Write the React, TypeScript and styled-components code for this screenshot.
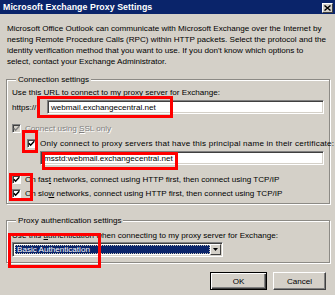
import React from "react";
import styled, { createGlobalStyle } from "styled-components";

const GlobalStyle = createGlobalStyle`
  html, body { margin: 0; padding: 0; background: #d4d0c8; }
  body { font-family: "Liberation Sans", Arial, sans-serif; }
`;

const FONT = `"Liberation Sans", Arial, sans-serif`;

const Window = styled.div`
  position: relative;
  width: 335px;
  height: 295px;
  background: #d4d0c8;
  font-family: ${FONT};
  font-size: 8.1px;
  color: #000;
  overflow: hidden;
  display: flex;
  flex-direction: column;
`;

const TitleBar = styled.div`
  height: 14px;
  background: #0a246a;
  display: flex;
  align-items: center;
  justify-content: space-between;
  padding: 0 2px 0 3px;
`;

const Title = styled.span`
  color: #fff;
  font-weight: bold;
  font-size: 8.8px;
  letter-spacing: 0.05px;
`;

const CloseButton = styled.div`
  width: 11px;
  height: 10px;
  margin-top: 1px;
  box-sizing: border-box;
  background: #d4d0c8;
  border: 1px solid;
  border-color: #fff #404040 #404040 #fff;
  display: flex;
  align-items: center;
  justify-content: center;
`;

const Content = styled.div`
  display: flex;
  flex-direction: column;
  padding: 0 5px 0 6px;
`;

const Description = styled.p`
  margin: 9px 0 0 1px;
  line-height: 11px;
  white-space: nowrap;
  font-size: 8.12px;
`;

const Group = styled.fieldset<{ $top: number; $bottom: number }>`
  margin: ${(p) => p.$top}px 0 0 0;
  padding: 0 5px ${(p) => p.$bottom}px 5px;
  border: 1px solid #8c8a85;
  box-shadow: inset 1px 1px 0 #fff, 1px 1px 0 #fff;
  min-width: 0;
  display: flex;
  flex-direction: column;
`;

const Legend = styled.legend`
  margin-left: 4px;
  padding: 0 2px;
  line-height: 11px;
  background: #d4d0c8;
`;

const Line = styled.div<{ $top: number; $indent?: number; $disabled?: boolean; $spacing?: number }>`
  display: flex;
  align-items: center;
  height: 11px;
  line-height: 11px;
  white-space: nowrap;
  margin-top: ${(p) => p.$top}px;
  padding-left: ${(p) => p.$indent ?? 0}px;
  letter-spacing: ${(p) => p.$spacing ?? 0}px;
  color: ${(p) => (p.$disabled ? "#808080" : "#000")};
  text-shadow: ${(p) => (p.$disabled ? "1px 1px 0 #fff" : "none")};
`;

const Field = styled.div<{ $top?: number; $indent?: number }>`
  display: flex;
  align-items: center;
  margin-top: ${(p) => p.$top ?? 0}px;
  padding-left: ${(p) => p.$indent ?? 0}px;
`;

const Prefix = styled.span`
  width: 35px;
  line-height: 11px;
`;

const TextBox = styled.div`
  flex: 1;
  height: 14px;
  box-sizing: border-box;
  background: #fff;
  border: 1px solid;
  border-color: #808080 #fff #fff #808080;
  box-shadow: inset 1px 1px 0 #404040, inset -1px -1px 0 #d4d0c8;
  display: flex;
  align-items: center;
  padding-left: 3px;
  white-space: nowrap;
  line-height: 11px;
`;

const Box = styled.span<{ $disabled?: boolean }>`
  width: 9px;
  height: 9px;
  box-sizing: border-box;
  flex: none;
  margin-right: 4px;
  background: ${(p) => (p.$disabled ? "#d4d0c8" : "#fff")};
  border: 1px solid;
  border-color: #808080 #fff #fff #808080;
  box-shadow: inset 1px 1px 0 #404040;
  display: flex;
  align-items: center;
  justify-content: center;
`;

const Key = styled.span`
  text-decoration: underline;
`;

const Select = styled.div`
  width: 211px;
  height: 15px;
  margin-top: 1px;
  box-sizing: border-box;
  border: 1px solid;
  border-color: #808080 #fff #fff #808080;
  box-shadow: inset 1px 1px 0 #404040, inset -1px -1px 0 #d4d0c8;
  background: #fff;
  display: flex;
  padding: 2px;
`;

const SelectValue = styled.div`
  flex: 1;
  background: #0a246a;
  color: #fff;
  outline: 1px dotted #c9c4b8;
  outline-offset: -1px;
  display: flex;
  align-items: center;
  padding-left: 2px;
  line-height: 11px;
  white-space: nowrap;
`;

const DropButton = styled.div`
  width: 11px;
  margin: -1px -1px -1px 0;
  box-sizing: border-box;
  background: #d4d0c8;
  border: 1px solid;
  border-color: #fff #404040 #404040 #fff;
  display: flex;
  align-items: center;
  justify-content: center;
`;

const ButtonRow = styled.div`
  display: flex;
  justify-content: flex-end;
  gap: 6px;
  margin-top: 9px;
  padding-right: 4px;
`;

const Button = styled.div<{ $default?: boolean; $w: number }>`
  width: ${(p) => p.$w}px;
  height: 18px;
  box-sizing: border-box;
  background: #d4d0c8;
  border: 1px solid;
  border-color: ${(p) => (p.$default ? "#000" : "#fff #404040 #404040 #fff")};
  box-shadow: ${(p) =>
    p.$default
      ? "inset 1px 1px 0 #fff, inset -1px -1px 0 #404040, inset -2px -2px 0 #808080"
      : "inset -1px -1px 0 #808080"};
  display: flex;
  align-items: center;
  justify-content: center;
  line-height: 11px;
`;

const Highlight = styled.div<{ $x: number; $y: number; $w: number; $h: number }>`
  position: absolute;
  left: ${(p) => p.$x}px;
  top: ${(p) => p.$y}px;
  width: ${(p) => p.$w}px;
  height: ${(p) => p.$h}px;
  box-sizing: border-box;
  border: 3px solid #f00;
  pointer-events: none;
`;

const Check = ({ color = "#000" }: { color?: string }) => (
  <svg width="7" height="7" viewBox="0 0 7 7">
    <polyline points="0.8,3.2 2.6,5.2 6.3,1.2" fill="none" stroke={color} strokeWidth="1.5" />
  </svg>
);

export default function App() {
  return (
    <Window>
      <GlobalStyle />
      <TitleBar>
        <Title>Microsoft Exchange Proxy Settings</Title>
        <CloseButton>
          <svg width="7" height="6" viewBox="0 0 7 6">
            <path d="M0.5 0.5 L6.5 5.5 M6.5 0.5 L0.5 5.5" stroke="#000" strokeWidth="1.4" />
          </svg>
        </CloseButton>
      </TitleBar>
      <Content>
        <Description>
          Microsoft Office Outlook can communicate with Microsoft Exchange over the Internet by
          <br />
          nesting Remote Procedure Calls (RPC) within HTTP packets. Select the protocol and the
          <br />
          identity verification method that you want to use. If you don't know which options to
          <br />
          select, contact your Exchange Administrator.
        </Description>

        <Group $top={7} $bottom={4}>
          <Legend>Connection settings</Legend>
          <Line $top={2}>
            Use this&nbsp;<Key>U</Key>RL to connect to my proxy server for Exchange:
          </Line>
          <Field $top={2}>
            <Prefix>https://</Prefix>
            <TextBox>webmail.exchangecentral.net</TextBox>
          </Field>
          <Line $top={9} $disabled>
            <Box $disabled>
              <Check color="#808080" />
            </Box>
            Connect using&nbsp;<Key>S</Key>SL only
          </Line>
          <Line $top={4} $indent={15} $spacing={0.2}>
            <Box>
              <Check />
            </Box>
            Only connect to proxy servers that have this principal name in their certificate:
          </Line>
          <Field $top={2} $indent={28}>
            <TextBox>msstd:webmail.exchangecentral.net</TextBox>
          </Field>
          <Line $top={9}>
            <Box>
              <Check />
            </Box>
            On fas<Key>t</Key>&nbsp;networks, connect using HTTP first, then connect using TCP/IP
          </Line>
          <Line $top={3}>
            <Box>
              <Check />
            </Box>
            On slo<Key>w</Key>&nbsp;networks, connect using HTTP first, then connect using TCP/IP
          </Line>
        </Group>

        <Group $top={11} $bottom={5}>
          <Legend>Proxy authentication settings</Legend>
          <Line $top={4}>
            Use this&nbsp;<Key>a</Key>uthentication when connecting to my proxy server for Exchange:
          </Line>
          <Select>
            <SelectValue>Basic Authentication</SelectValue>
            <DropButton>
              <svg width="5" height="3" viewBox="0 0 5 3">
                <path d="M0 0 H5 L2.5 3 Z" fill="#000" />
              </svg>
            </DropButton>
          </Select>
        </Group>

        <ButtonRow>
          <Button $default $w={57}>OK</Button>
          <Button $w={53}>Cancel</Button>
        </ButtonRow>
      </Content>

      <Highlight $x={37} $y={96} $w={136} $h={22} />
      <Highlight $x={22} $y={130} $w={16} $h={23} />
      <Highlight $x={42} $y={152} $w={136} $h={18} />
      <Highlight $x={9} $y={173} $w={24} $h={28} />
      <Highlight $x={8} $y={233} $w={93} $h={35} />
    </Window>
  );
}
